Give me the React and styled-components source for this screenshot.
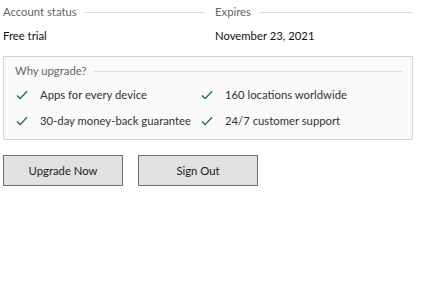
import React from 'react';
import styled, { createGlobalStyle } from 'styled-components';

const Global = createGlobalStyle`
  body {
    margin: 0;
    background: #fff;
    font-family: Lato, "Open Sans", sans-serif;
    font-size: 11.3px;
    color: #1a1a1a;
  }
`;

const Page = styled.div`
  padding: 4px 19px 0 3px;
  display: flex;
  flex-direction: column;
`;

const InfoRow = styled.div`
  display: grid;
  grid-template-columns: 212px 1fr;
`;

const Field = styled.div`
  display: flex;
  flex-direction: column;
  gap: 8px;
  padding-right: ${p => p.$gap || 0}px;
`;

const Legend = styled.div`
  display: flex;
  align-items: center;
  gap: 8px;
  color: #666;
  line-height: 16px;

  &::after {
    content: '';
    flex: 1;
    height: 1px;
    background: #dcdcdc;
  }
`;

const Value = styled.div`
  line-height: 16px;
  color: #111;
`;

const Panel = styled.div`
  margin-top: 12px;
  border: 1px solid #d4d4d4;
  background: #fafafa;
  padding: 6px 10px 10px 11px;
  display: flex;
  flex-direction: column;
  gap: 8px;
`;

const Features = styled.div`
  display: grid;
  grid-template-columns: 185px 1fr;
  row-gap: 10px;
`;

const Feature = styled.div`
  display: flex;
  align-items: center;
  gap: 12px;
  line-height: 16px;
  color: #333;
  padding-left: 1px;
  white-space: nowrap;
`;

const Check = () => (
  <svg width="12" height="10" viewBox="0 0 12 10">
    <path d="M1 5.5 L4.2 8.6 L11 1.2" fill="none" stroke="#1c6b5a" strokeWidth="1.4" />
  </svg>
);

const Actions = styled.div`
  display: flex;
  gap: 15px;
  margin-top: 15px;
`;

const Button = styled.button`
  width: 120px;
  height: 31px;
  background: #e1e1e1;
  border: 1px solid #707070;
  font-family: inherit;
  font-size: 11.3px;
  color: #1a1a1a;
  padding: 0;
`;

const features = [
  'Apps for every device',
  '160 locations worldwide',
  '30-day money-back guarantee',
  '24/7 customer support',
];

export default function App() {
  return (
    <>
      <Global />
      <Page>
        <InfoRow>
          <Field $gap={10}>
            <Legend>Account status</Legend>
            <Value>Free trial</Value>
          </Field>
          <Field>
            <Legend>Expires</Legend>
            <Value>November 23, 2021</Value>
          </Field>
        </InfoRow>
        <Panel>
          <Legend>Why upgrade?</Legend>
          <Features>
            {features.map(f => (
              <Feature key={f}>
                <Check />
                {f}
              </Feature>
            ))}
          </Features>
        </Panel>
        <Actions>
          <Button>Upgrade Now</Button>
          <Button>Sign Out</Button>
        </Actions>
      </Page>
    </>
  );
}
